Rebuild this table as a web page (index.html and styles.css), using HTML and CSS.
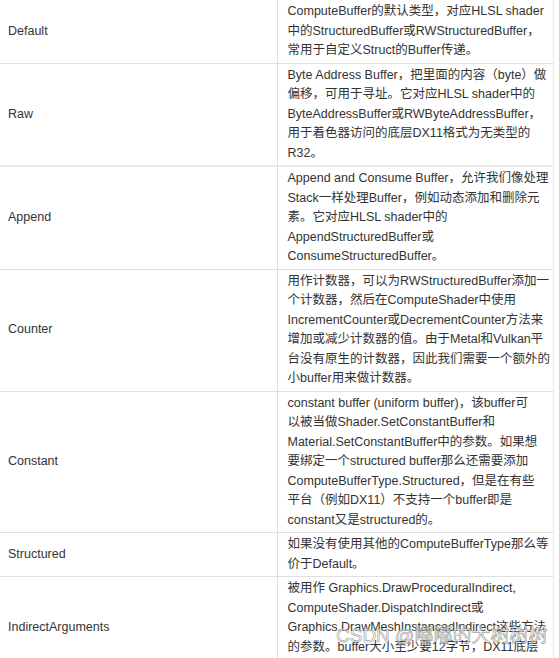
FILE: index.html
```html
<!DOCTYPE html>
<html lang="zh-CN">
<head>
    <meta charset="UTF-8">
    <meta name="viewport" content="width=device-width, initial-scale=1.0">
    <title>ComputeBufferType</title>
    <link rel="stylesheet" href="styles.css">
</head>
<body>

    <div class="table-wrap">
        <table class="type-table">
            <colgroup>
                <col class="col-name">
                <col class="col-desc">
            </colgroup>
            <tr>
                <td class="name">Default</td>
                <td class="desc">ComputeBuffer的默认类型，对应HLSL shader<br>中的StructuredBuffer或RWStructuredBuffer，<br>常用于自定义Struct的Buffer传递。</td>
            </tr>
            <tr class="thick">
                <td class="name">Raw</td>
                <td class="desc">Byte Address Buffer，把里面的内容（byte）做<br>偏移，可用于寻址。它对应HLSL shader中的<br>ByteAddressBuffer或RWByteAddressBuffer，<br>用于着色器访问的底层DX11格式为无类型的<br>R32。</td>
            </tr>
            <tr>
                <td class="name">Append</td>
                <td class="desc">Append and Consume Buffer，允许我们像处理<br>Stack一样处理Buffer，例如动态添加和删除元<br>素。它对应HLSL shader中的<br>AppendStructuredBuffer或<br>ConsumeStructuredBuffer。</td>
            </tr>
            <tr>
                <td class="name">Counter</td>
                <td class="desc">用作计数器，可以为RWStructuredBuffer添加一<br>个计数器，然后在ComputeShader中使用<br>IncrementCounter或DecrementCounter方法来<br>增加或减少计数器的值。由于Metal和Vulkan平<br>台没有原生的计数器，因此我们需要一个额外的<br>小buffer用来做计数器。</td>
            </tr>
            <tr>
                <td class="name">Constant</td>
                <td class="desc">constant buffer (uniform buffer)，该buffer可<br>以被当做Shader.SetConstantBuffer和<br>Material.SetConstantBuffer中的参数。如果想<br>要绑定一个structured buffer那么还需要添加<br>ComputeBufferType.Structured，但是在有些<br>平台（例如DX11）不支持一个buffer即是<br>constant又是structured的。</td>
            </tr>
            <tr>
                <td class="name">Structured</td>
                <td class="desc">如果没有使用其他的ComputeBufferType那么等<br>价于Default。</td>
            </tr>
            <tr>
                <td class="name">IndirectArguments</td>
                <td class="desc">被用作 Graphics.DrawProceduralIndirect,<br>ComputeShader.DispatchIndirect或<br>Graphics.DrawMeshInstancedIndirect这些方法<br>的参数。buffer大小至少要12字节，DX11底层<br>UAV为Raw，SRV为ByteAddressBuffer。</td>
            </tr>
        </table>

        <!-- watermark over the last row -->
        <div class="watermark">CSDN @嘟嘟的大树树树</div>
    </div>

</body>
</html>
```

FILE: styles.css
```css
body {
    margin: 0;
    background-color: white;
    font-family: "Liberation Sans", "Noto Sans CJK SC", sans-serif;
    font-size: 12.5px;
    color: #333;
    overflow: hidden;
}
.table-wrap {
    position: relative;
}
.type-table {
    border-collapse: collapse;
    table-layout: fixed;
    width: 553px;
}
.col-name {
    width: 277px;
}
.col-desc {
    width: 276px;
}
.type-table td {
    line-height: 19.5px;
    padding: 2px 10px;
    vertical-align: middle;
    border-top: 1px solid #dfdfdf;
    border-bottom: 1px solid #dfdfdf;
    white-space: nowrap;
}
.type-table tr:first-child td {
    border-top: none;
}
.type-table td.name {
    padding-left: 8px;
    border-right: 1px solid #dfdfdf;
}
.type-table td.desc {
    border-right: 1px solid #e6e6e6;
}
.type-table tr.thick td {
    border-bottom: 2px solid #ebebeb;
}
.watermark {
    position: absolute;
    left: 336px;
    top: 620px;
    font-size: 19px;
    color: rgba(255, 255, 255, 0.75);
    -webkit-text-stroke: 0.7px rgba(120, 120, 120, 0.7);
    white-space: nowrap;
}
```
